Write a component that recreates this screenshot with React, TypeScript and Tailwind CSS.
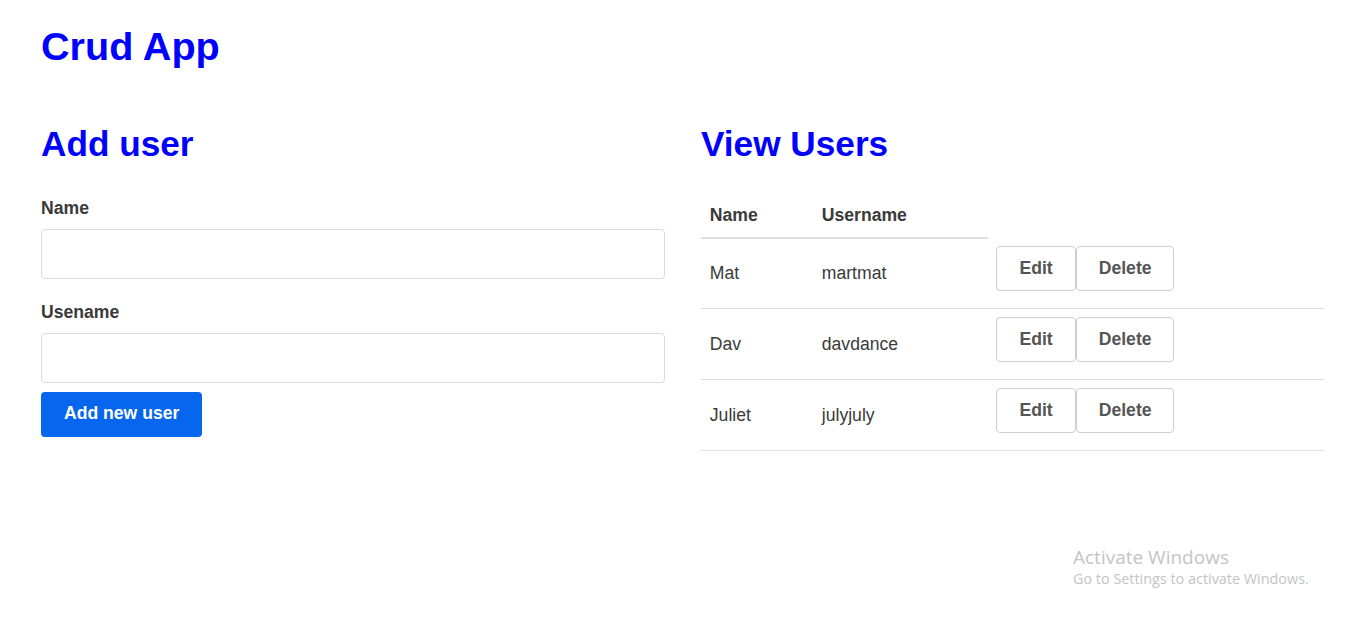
import React from "react";

const users = [
  { name: "Mat", username: "martmat" },
  { name: "Dav", username: "davdance" },
  { name: "Juliet", username: "julyjuly" },
];

function ActionButton({ label, pad }: { label: string; pad: string }) {
  return (
    <button className={`h-[45px] ${pad} pt-[2px] border border-[#cfcfcf] rounded-[4px] bg-white text-[#555] font-bold text-[17.6px] leading-none`}>
      {label}
    </button>
  );
}

export default function App() {
  return (
    <div className="relative min-h-[619px] bg-white font-['Liberation_Sans',Arial,sans-serif] text-[#3a3a3a]">
      <div className="pl-[41px] pr-[39px] pt-[23px]">
        <h1 className="text-[39.6px] leading-[1.2] font-bold text-[#0000ff]">Crud App</h1>
        <div className="mt-[52px] grid grid-cols-[624px_624px] gap-[36px]">
          <section>
            <h2 className="text-[35.2px] leading-[1.2] font-bold text-[#0000ff]">Add user</h2>
            <form className="mt-[30px] flex flex-col" onSubmit={(e) => e.preventDefault()}>
              <label className="text-[17.6px] leading-[1.5] font-bold">Name</label>
              <input className="mt-[8px] h-[50px] w-full border border-[#dcdcdc] rounded-[4px] px-3 text-[17.6px] outline-none" />
              <label className="mt-[19.5px] text-[17.6px] leading-[1.5] font-bold">Usename</label>
              <input className="mt-[7.5px] h-[50px] w-full border border-[#dcdcdc] rounded-[4px] px-3 text-[17.6px] outline-none" />
              <div className="mt-[9px]">
                <button className="h-[45px] px-[23px] rounded-[4px] bg-[#0766ee] text-white font-bold text-[17.6px] leading-none">
                  Add new user
                </button>
              </div>
            </form>
          </section>
          <section>
            <h2 className="text-[35.2px] leading-[1.2] font-bold text-[#0000ff]">View Users</h2>
            <table className="mt-[28px] w-full border-collapse text-[17.6px] leading-[1.5]">
              <thead>
                <tr>
                  <th className="w-[112px] text-left font-bold py-[8.8px] px-[8.8px] border-b-2 border-[#dedede]">Name</th>
                  <th className="w-[175px] text-left font-bold py-[8.8px] px-[8.8px] border-b-2 border-[#dedede]">Username</th>
                </tr>
              </thead>
              <tbody>
                {users.map((u) => (
                  <tr key={u.name} className="border-b border-[#e0e0e0]">
                    <td className="px-[8.8px] align-middle">{u.name}</td>
                    <td className="px-[8.8px] align-middle">{u.username}</td>
                    <td className="pl-[8px] pt-[8px] pb-[17px] align-top">
                      <div className="flex">
                        <ActionButton label="Edit" pad="px-[22.5px]" />
                        <ActionButton label="Delete" pad="px-[21.5px]" />
                      </div>
                    </td>
                  </tr>
                ))}
              </tbody>
            </table>
          </section>
        </div>
      </div>
      <div className="absolute left-[1073px] top-[544px] font-['Open_Sans','Noto_Sans',sans-serif] text-[#c4c4c4]">
        <div className="text-[19px] leading-[26px]">Activate Windows</div>
        <div className="text-[14.4px] leading-[18px]">Go to Settings to activate Windows.</div>
      </div>
    </div>
  );
}
